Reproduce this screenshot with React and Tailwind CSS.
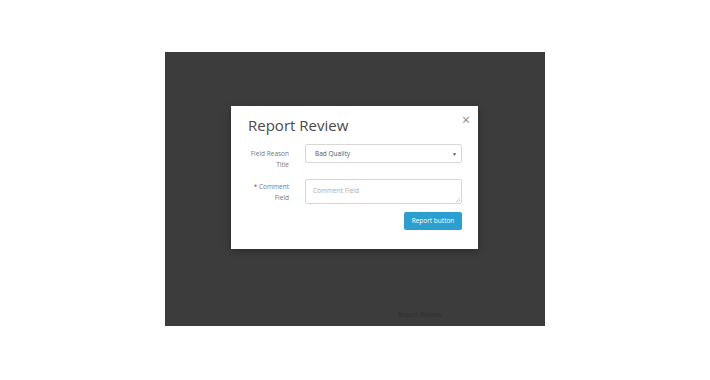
export default function App() {
  return (
    <div className="w-[710px] h-[380px] bg-white pt-[52px] pl-[165px] font-['Open_Sans',sans-serif]">
      <div className="w-[380px] h-[274px] bg-[#3c3c3c] pt-[54px] pl-[66px] flex flex-col">
        <div className="w-[247px] h-[143px] bg-white pt-[9px] pl-[17px] pr-[16px] shadow-[0_2px_8px_rgba(0,0,0,0.3)]">
          <div className="flex items-start justify-between">
            <h2 className="text-[15px] leading-[20px] text-[#4a4a4a]">Report Review</h2>
            <button className="text-[#888] text-[14px] leading-[14px] -mt-[2px] -mr-[8px]">×</button>
          </div>

          <div className="mt-[9px] flex items-start h-[19px]">
            <label className="w-[41px] text-right text-[6.5px] leading-[11px] text-[#777] pt-[4px] shrink-0">
              Field Reason
              <br />
              Title
            </label>
            <div className="ml-[16px] flex-1 h-[19px] border border-[#d7d7d7] rounded-[2px] flex items-center justify-between pl-[9px] pr-[4px] leading-[10px]">
              <span className="text-[6.5px] text-[#555]">Bad Quality</span>
              <span className="text-[5px] text-[#555]">▼</span>
            </div>
          </div>

          <div className="mt-[16px] flex items-start h-[25px]">
            <label className="w-[41px] text-right text-[6.5px] leading-[11px] text-[#777] pt-[2px] shrink-0">
              <span className="text-[#e03030]">*</span> Comment
              <br />
              Field
            </label>
            <div className="ml-[16px] flex-1 h-[25px] border border-[#d7d7d7] rounded-[2px] relative pl-[7px] pt-[2px] leading-[10px]">
              <span className="text-[6.5px] text-[#aaa]">Comment Field</span>
              <svg className="absolute right-[1px] bottom-[1px]" width="4" height="4" viewBox="0 0 4 4">
                <path d="M0 4 L4 0 M2 4 L4 2" stroke="#aaa" strokeWidth="0.6" />
              </svg>
            </div>
          </div>

          <div className="mt-[8px] flex justify-end">
            <button className="w-[58px] h-[18px] rounded-[2px] bg-[#2a9fd0] text-white text-[6.5px] leading-[10px]">
              Report button
            </button>
          </div>
        </div>

        <div className="mt-[62px] pl-[167px] text-[6.5px] leading-[8px] text-[#2f2f2f]">Report Review</div>
      </div>
    </div>
  );
}
